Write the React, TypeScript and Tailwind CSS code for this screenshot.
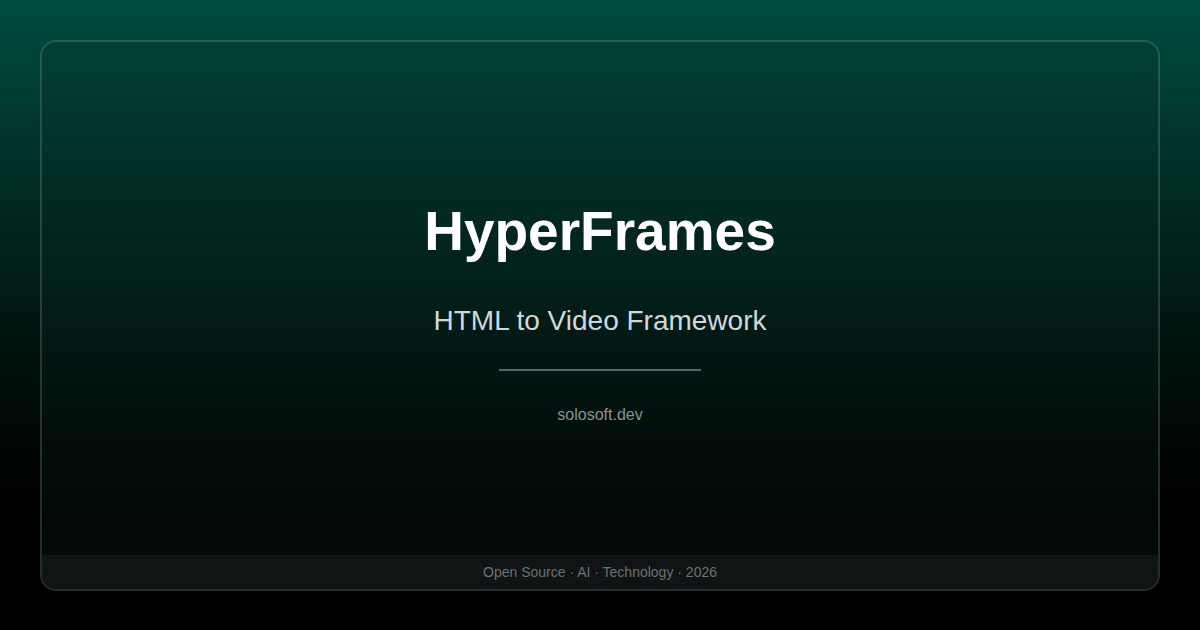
export default function App() {
  return (
    <div
      className="w-[1200px] h-[630px] bg-gradient-to-b from-[#004d40] to-[#000000] p-[40px]"
      style={{ fontFamily: '"Liberation Sans", Arial, sans-serif' }}
    >
      <div className="h-[551px] flex flex-col rounded-[16px] border-2 border-white/15 bg-[#0b2b26]/20 overflow-hidden">
        <div className="flex-1 flex flex-col items-center justify-center pt-[26px]">
          <h1 className="text-[55px] leading-[64px] font-bold text-white">HyperFrames</h1>
          <p className="mt-[42px] text-[28px] leading-[32px] text-[#cfd8dc]">HTML to Video Framework</p>
          <div className="mt-[32px] w-[202px] h-[2px] bg-[#5b6468]" />
          <p className="mt-[34px] text-[16px] leading-[20px] text-[#8a9295]">solosoft.dev</p>
        </div>
        <div className="h-[34px] bg-[#101414] flex items-center justify-center text-[14px] text-[#6b7275]">
          Open Source · AI · Technology · 2026
        </div>
      </div>
    </div>
  );
}
